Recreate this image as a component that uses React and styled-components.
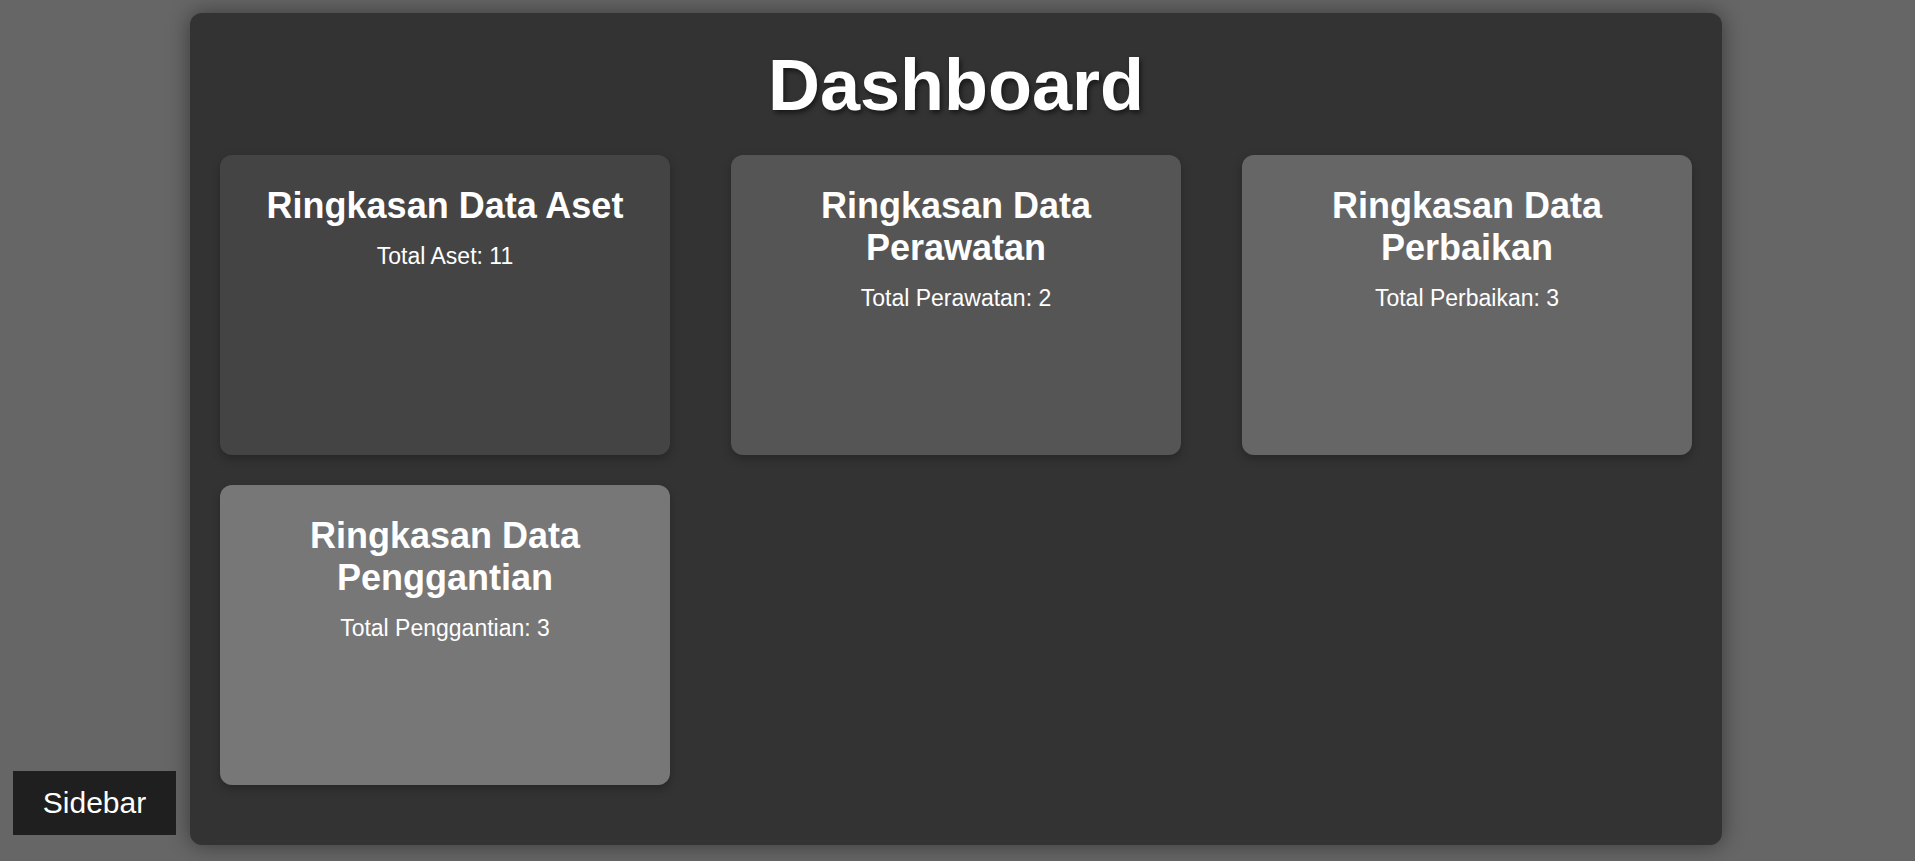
import React from "react";
import styled, { createGlobalStyle } from "styled-components";

const GlobalStyle = createGlobalStyle`
  html, body {
    margin: 0;
    padding: 0;
    background: #666666;
    min-height: 100%;
  }
  body {
    font-family: "Liberation Sans", Arial, sans-serif;
    color: #ffffff;
  }
`;

const Page = styled.div`
  min-height: 100vh;
  padding: 13px 3px 17px 0;
  box-sizing: border-box;
`;

const Panel = styled.main`
  width: 1532px;
  margin: 0 auto;
  box-sizing: border-box;
  padding: 30px 30px 60px;
  background: #333333;
  border-radius: 12px;
  box-shadow: 0 0 22px rgba(0, 0, 0, 0.45);
`;

const Title = styled.h1`
  margin: 1px 0 29px;
  text-align: center;
  font-size: 72px;
  font-weight: 700;
  line-height: normal;
  text-shadow: 2px 3px 5px rgba(0, 0, 0, 0.55);
`;

const Grid = styled.div`
  display: grid;
  grid-template-columns: repeat(3, 450px);
  justify-content: space-between;
  row-gap: 30px;
`;

const Card = styled.section`
  height: 300px;
  box-sizing: border-box;
  padding: 30px 10px;
  border-radius: 12px;
  background: ${(p) => p.$bg};
  box-shadow: 0 4px 10px rgba(0, 0, 0, 0.25);
  text-align: center;
`;

const CardTitle = styled.h2`
  margin: 0 0 16px;
  font-size: 36px;
  font-weight: 700;
  line-height: normal;
`;

const CardValue = styled.p`
  margin: 0;
  font-size: 23px;
  line-height: normal;
`;

const SidebarButton = styled.button`
  position: fixed;
  left: 13px;
  bottom: 26px;
  width: 163px;
  height: 64px;
  border: none;
  background: #1f1f1f;
  color: #ffffff;
  font-family: "Liberation Sans", Arial, sans-serif;
  font-size: 30px;
  cursor: pointer;
`;

const summaries = [
  { title: "Ringkasan Data Aset", label: "Total Aset", value: 11, bg: "#444444" },
  { title: "Ringkasan Data Perawatan", label: "Total Perawatan", value: 2, bg: "#555555" },
  { title: "Ringkasan Data Perbaikan", label: "Total Perbaikan", value: 3, bg: "#666666" },
  { title: "Ringkasan Data Penggantian", label: "Total Penggantian", value: 3, bg: "#777777" },
];

const App = () => {
  return (
    <Page>
      <GlobalStyle />
      <Panel>
        <Title>Dashboard</Title>
        <Grid>
          {summaries.map((s) => (
            <Card key={s.title} $bg={s.bg}>
              <CardTitle>{s.title}</CardTitle>
              <CardValue>
                {s.label}: {s.value}
              </CardValue>
            </Card>
          ))}
        </Grid>
      </Panel>
      <SidebarButton>Sidebar</SidebarButton>
    </Page>
  );
};

export default App;
